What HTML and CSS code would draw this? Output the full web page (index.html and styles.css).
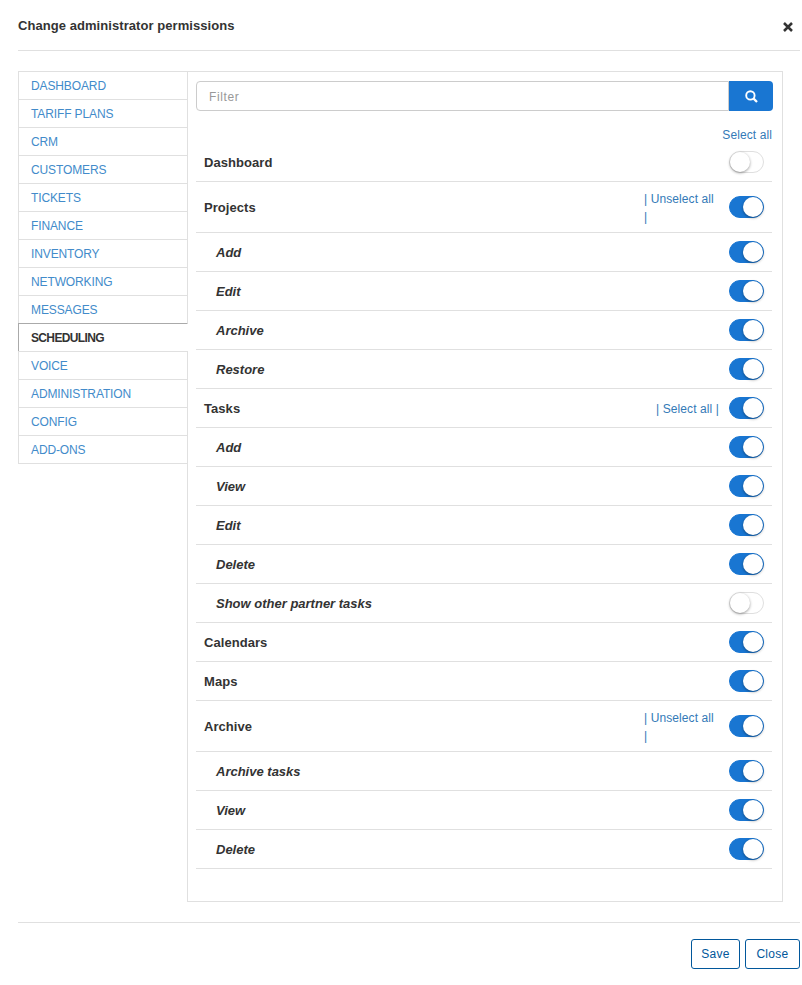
FILE: index.html
```html
<!DOCTYPE html>
<html lang="en">
<head>
<meta charset="utf-8">
<title>Change administrator permissions</title>
<link rel="stylesheet" href="styles.css">
</head>
<body>
<div class="dialog">
  <header class="dialog-header">
    <h1>Change administrator permissions</h1>
    <button class="dismiss" aria-label="Close"><svg width="10" height="10" viewBox="0 0 10 10"><path d="M1 1l8 8M9 1L1 9" stroke="#333" stroke-width="2.5" fill="none"/></svg></button>
  </header>
  <main class="dialog-body">
    <nav class="tabs">
      <a>DASHBOARD</a>
      <a>TARIFF PLANS</a>
      <a>CRM</a>
      <a>CUSTOMERS</a>
      <a>TICKETS</a>
      <a>FINANCE</a>
      <a>INVENTORY</a>
      <a>NETWORKING</a>
      <a>MESSAGES</a>
      <a class="active">SCHEDULING</a>
      <a>VOICE</a>
      <a>ADMINISTRATION</a>
      <a>CONFIG</a>
      <a>ADD-ONS</a>
    </nav>
    <section class="panel">
      <div class="search">
        <input type="text" placeholder="Filter">
        <button aria-label="Search"><svg width="13" height="13" viewBox="0 0 13 13"><circle cx="5.4" cy="5.4" r="4.2" stroke="#fff" stroke-width="1.9" fill="none"/><path d="M8.4 8.4l3.6 3.6" stroke="#fff" stroke-width="2.3"/></svg></button>
      </div>
      <a class="select-all">Select all</a>
      <div class="row"><b>Dashboard</b><i class="switch"></i></div>
      <div class="row tall"><b>Projects</b><a class="bulk">| Unselect all |</a><i class="switch on"></i></div>
      <div class="row sub"><b>Add</b><i class="switch on"></i></div>
      <div class="row sub"><b>Edit</b><i class="switch on"></i></div>
      <div class="row sub"><b>Archive</b><i class="switch on"></i></div>
      <div class="row sub"><b>Restore</b><i class="switch on"></i></div>
      <div class="row"><b>Tasks</b><a class="bulk">| Select all |</a><i class="switch on"></i></div>
      <div class="row sub"><b>Add</b><i class="switch on"></i></div>
      <div class="row sub"><b>View</b><i class="switch on"></i></div>
      <div class="row sub"><b>Edit</b><i class="switch on"></i></div>
      <div class="row sub"><b>Delete</b><i class="switch on"></i></div>
      <div class="row sub"><b>Show other partner tasks</b><i class="switch"></i></div>
      <div class="row"><b>Calendars</b><i class="switch on"></i></div>
      <div class="row"><b>Maps</b><i class="switch on"></i></div>
      <div class="row tall"><b>Archive</b><a class="bulk">| Unselect all |</a><i class="switch on"></i></div>
      <div class="row sub"><b>Archive tasks</b><i class="switch on"></i></div>
      <div class="row sub"><b>View</b><i class="switch on"></i></div>
      <div class="row sub"><b>Delete</b><i class="switch on"></i></div>
    </section>
  </main>
  <footer class="dialog-footer">
    <button class="save">Save</button>
    <button class="close">Close</button>
  </footer>
</div>
</body>
</html>
```
FILE: styles.css
```css
* { box-sizing: border-box; }
body {
  margin: 0;
  background: #fff;
  color: #333;
  font: 12px/18px "Liberation Sans", Arial, sans-serif;
  letter-spacing: 0.1px;
}
button { font: inherit; letter-spacing: inherit; padding: 0; margin: 0; }
.dialog { width: 800px; height: 985px; padding-left: 18px; }
.dialog-header {
  height: 51px;
  display: flex;
  align-items: center;
  justify-content: space-between;
  padding: 4px 7px 2px 0;
  border-bottom: 1px solid #e0e0e0;
}
h1 { margin: 0; font-size: 13px; font-weight: bold; letter-spacing: 0.06px; }
.dismiss { border: 0; background: none; display: flex; padding-top: 2px; }
.dialog-body { display: flex; padding: 20px 17px 20px 0; align-items: stretch; }
.tabs { width: 170px; margin-right: -1px; z-index: 1; }
.tabs a {
  display: block;
  height: 28px;
  padding: 5px 0 0 12px;
  border: solid #e0e0e0;
  border-width: 1px 1px 0 1px;
  color: #428bca;
  letter-spacing: -0.12px;
}
.tabs a:last-child { height: 29px; border-bottom-width: 1px; }
.tabs a.active {
  color: #333;
  font-weight: bold;
  letter-spacing: -0.65px;
  background: #fff;
  border-color: #aaa #fff #aaa #aaa;
}
.panel { width: 596px; height: 831px; border: 1px solid #e0e0e0; padding: 9px 10px 0 8px; }
.search { display: flex; height: 30px; margin-right: -1px; }
.search input {
  flex: 1;
  min-width: 0;
  font: inherit;
  letter-spacing: 0.6px;
  padding: 1px 12px 0;
  border: 1px solid #ccc;
  border-radius: 4px 0 0 4px;
  outline: 0;
}
.search input::placeholder { color: #999; opacity: 1; }
.search button {
  width: 44px;
  border: 0;
  border-radius: 0 4px 4px 0;
  background: #1976d2;
  display: flex;
  align-items: center;
  justify-content: center;
}
.select-all { display: block; height: 32px; padding-top: 15px; text-align: right; color: #337ab7; }
.row {
  height: 39px;
  display: flex;
  align-items: center;
  border-bottom: 1px solid #e0e0e0;
  padding: 0 8px;
}
.row.tall { height: 51px; }
.row b { flex: 1; padding-top: 2px; font-size: 13px; letter-spacing: 0.06px; }
.row.sub b { padding-left: 12px; font-style: italic; letter-spacing: 0; }
.bulk { color: #337ab7; width: 75px; padding-top: 1px; margin-right: 10px; text-align: right; }
.tall .bulk { text-align: left; }
.switch {
  display: block;
  width: 35px;
  height: 22px;
  border-radius: 11px;
  background: #fff;
  border: 1px solid #dfdfdf;
}
.switch::before {
  content: "";
  display: block;
  width: 20px;
  height: 20px;
  border-radius: 50%;
  background: #fff;
  box-shadow: 0 1px 3px rgba(0, 0, 0, 0.4);
}
.switch.on { background: #1976d2; border-color: #1976d2; }
.switch.on::before { margin-left: 13px; }
.dialog-footer {
  border-top: 1px solid #e0e0e0;
  padding-top: 16px;
  display: flex;
  justify-content: flex-end;
  gap: 5px;
}
.dialog-footer button {
  height: 30px;
  border: 1px solid #01579b;
  border-radius: 3px;
  background: #fff;
  color: #01579b;
  letter-spacing: 0.3px;
}
.save { width: 49px; }
.close { width: 55px; }
```
